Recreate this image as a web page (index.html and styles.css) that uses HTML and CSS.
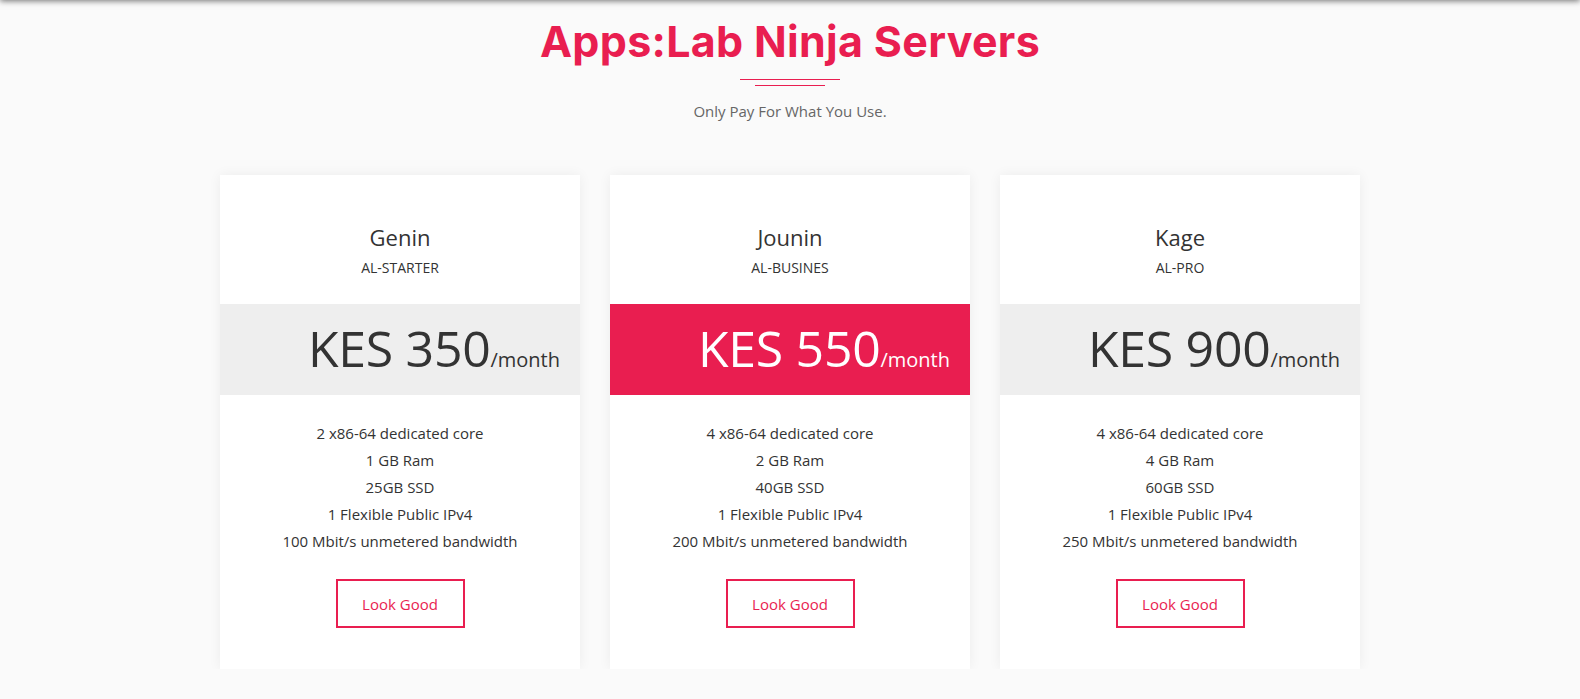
FILE: index.html
```html
<!DOCTYPE html>
<html lang="en">
<head>
<meta charset="utf-8">
<title>Apps:Lab Ninja Servers</title>
<link rel="stylesheet" href="styles.css">
</head>
<body>
<div class="topbar"></div>
<section class="pricing">
  <header class="heading">
    <h1 class="title">Apps:Lab Ninja Servers</h1>
    <div class="divider"><span class="line-long"></span><span class="line-short"></span></div>
    <p class="subtitle">Only Pay For What You Use.</p>
  </header>
  <div class="cards">
    <div class="card">
      <div class="card-head">
        <h3 class="plan-name">Genin</h3>
        <p class="plan-code">AL-STARTER</p>
      </div>
      <div class="price"><span class="amount">KES 350</span><span class="period">/month</span></div>
      <ul class="features">
        <li>2 x86-64 dedicated core</li>
        <li>1 GB Ram</li>
        <li>25GB SSD</li>
        <li>1 Flexible Public IPv4</li>
        <li>100 Mbit/s unmetered bandwidth</li>
      </ul>
      <a class="btn" href="#">Look Good</a>
    </div>
    <div class="card">
      <div class="card-head">
        <h3 class="plan-name">Jounin</h3>
        <p class="plan-code">AL-BUSINES</p>
      </div>
      <div class="price price-featured"><span class="amount">KES 550</span><span class="period">/month</span></div>
      <ul class="features">
        <li>4 x86-64 dedicated core</li>
        <li>2 GB Ram</li>
        <li>40GB SSD</li>
        <li>1 Flexible Public IPv4</li>
        <li>200 Mbit/s unmetered bandwidth</li>
      </ul>
      <a class="btn" href="#">Look Good</a>
    </div>
    <div class="card">
      <div class="card-head">
        <h3 class="plan-name">Kage</h3>
        <p class="plan-code">AL-PRO</p>
      </div>
      <div class="price"><span class="amount">KES 900</span><span class="period">/month</span></div>
      <ul class="features">
        <li>4 x86-64 dedicated core</li>
        <li>4 GB Ram</li>
        <li>60GB SSD</li>
        <li>1 Flexible Public IPv4</li>
        <li>250 Mbit/s unmetered bandwidth</li>
      </ul>
      <a class="btn" href="#">Look Good</a>
    </div>
  </div>
</section>
</body>
</html>
```

FILE: styles.css
```css
* { box-sizing: border-box; }
html, body { margin: 0; padding: 0; }
body {
  background: #fafafa;
  font-family: "Open Sans", "Liberation Sans", sans-serif;
  color: #333;
  overflow: hidden;
}
.topbar {
  position: fixed;
  top: -60px;
  left: 0;
  right: 0;
  height: 60px;
  background: #fff;
  box-shadow: 0 1px 6px rgba(0,0,0,0.55);
}
.pricing { padding-top: 14px; }
.heading {
  display: flex;
  flex-direction: column;
  align-items: center;
}
.title {
  margin: 0;
  font-family: "Inter", "Noto Sans", sans-serif;
  font-weight: 700;
  font-size: 43px;
  line-height: 54px;
  color: #e91e50;
  letter-spacing: 0.3px;
}
.divider {
  display: flex;
  flex-direction: column;
  align-items: center;
  gap: 5px;
  margin-top: 11px;
}
.line-long { display: block; width: 100px; height: 1px; background: #e91e50; }
.line-short { display: block; width: 70px; height: 1px; background: #e91e50; }
.subtitle {
  margin: 15px 0 0;
  font-size: 15px;
  line-height: 20px;
  color: #666;
}
.cards {
  display: flex;
  justify-content: center;
  gap: 30px;
  margin-top: 54px;
}
.card {
  width: 360px;
  background: #fff;
  box-shadow: 0 0 12px rgba(0,0,0,0.06);
  display: flex;
  flex-direction: column;
  align-items: center;
  padding-bottom: 41px;
}
.card-head {
  width: 100%;
  height: 129px;
  padding-top: 47px;
  text-align: center;
}
.plan-name {
  margin: 0;
  font-size: 22px;
  font-weight: 400;
  line-height: 30px;
  color: #333;
}
.plan-code {
  margin: 6px 0 0;
  font-size: 14px;
  line-height: 20px;
  color: #333;
}
.price {
  width: 100%;
  height: 91px;
  background: #eeeeee;
  color: #333;
  display: flex;
  justify-content: center;
  align-items: baseline;
  padding-left: 68px;
  padding-top: 19px;
  line-height: 1;
}
.price-featured { background: #e91e50; color: #fff; }
.amount { font-size: 50px; font-weight: 400; letter-spacing: -0.3px; }
.period { font-size: 20px; font-weight: 400; }
.features {
  list-style: none;
  margin: 0;
  padding: 25px 0 0;
  text-align: center;
  font-size: 15px;
  line-height: 27px;
  color: #333;
}
.btn {
  margin-top: 24px;
  width: 129px;
  height: 49px;
  border: 2px solid #e91e50;
  color: #e91e50;
  text-decoration: none;
  font-size: 15px;
  display: flex;
  align-items: center;
  justify-content: center;
}
```
